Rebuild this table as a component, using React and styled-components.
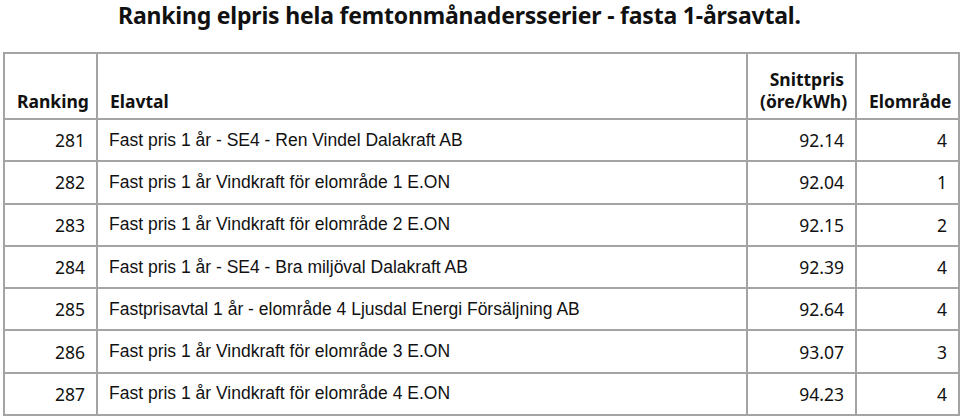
import React from "react";
import styled, { createGlobalStyle } from "styled-components";

const Global = createGlobalStyle`
  html, body { margin: 0; padding: 0; background: #fff; }
  body { font-family: "Liberation Sans", Arial, sans-serif; color: #111; }
`;

const Page = styled.div`
  padding: 0 2px 0 3px;
`;

const Title = styled.h1`
  margin: 0;
  padding: 0 0 0 115px;
  height: 52px;
  box-sizing: border-box;
  font-family: "Noto Sans", sans-serif;
  font-weight: 700;
  font-size: 23px;
  line-height: 31px;
  color: #111;
  letter-spacing: -0.2px;
`;

const Table = styled.table`
  width: 955px;
  border-collapse: collapse;
  table-layout: fixed;
  border: 2px solid #a4a4a4;
`;

const Th = styled.th`
  border: 2px solid #a4a4a4;
  height: 58px;
  padding: 0 11px 6px 12px;
  vertical-align: bottom;
  text-align: ${(p) => p.$align || "left"};
  font-family: "Noto Sans", sans-serif;
  font-weight: 700;
  font-size: 17.5px;
  line-height: 22px;
  color: #111;
`;

const Td = styled.td`
  border: 2px solid #a4a4a4;
  height: 40.3px;
  padding: 0 11px 0 11px;
  vertical-align: middle;
  text-align: ${(p) => p.$align || "left"};
  font-family: ${(p) =>
    p.$num ? '"Noto Sans", sans-serif' : '"Liberation Sans", Arial, sans-serif'};
  font-size: 17.5px;
  color: #111;
  white-space: nowrap;
`;

const rows = [
  [281, "Fast pris 1 år - SE4 - Ren Vindel Dalakraft AB", "92.14", 4],
  [282, "Fast pris 1 år Vindkraft för elområde 1 E.ON", "92.04", 1],
  [283, "Fast pris 1 år Vindkraft för elområde 2 E.ON", "92.15", 2],
  [284, "Fast pris 1 år - SE4 - Bra miljöval Dalakraft AB", "92.39", 4],
  [285, "Fastprisavtal 1 år - elområde 4 Ljusdal Energi Försäljning AB", "92.64", 4],
  [286, "Fast pris 1 år Vindkraft för elområde 3 E.ON", "93.07", 3],
  [287, "Fast pris 1 år Vindkraft för elområde 4 E.ON", "94.23", 4],
];

export default function App() {
  return (
    <>
      <Global />
      <Page>
        <Title>Ranking elpris hela femtonmånadersserier - fasta 1-årsavtal.</Title>
        <Table>
          <colgroup>
            <col style={{ width: 93 }} />
            <col style={{ width: 650 }} />
            <col style={{ width: 109 }} />
            <col style={{ width: 103 }} />
          </colgroup>
          <thead>
            <tr>
              <Th $align="right">Ranking</Th>
              <Th>Elavtal</Th>
              <Th $align="right">
                Snittpris
                <br />
                (öre/kWh)
              </Th>
              <Th $align="right">Elområde</Th>
            </tr>
          </thead>
          <tbody>
            {rows.map(([rank, name, price, area]) => (
              <tr key={rank}>
                <Td $align="right" $num>{rank}</Td>
                <Td>{name}</Td>
                <Td $align="right" $num>{price}</Td>
                <Td $align="right" $num>{area}</Td>
              </tr>
            ))}
          </tbody>
        </Table>
      </Page>
    </>
  );
}
